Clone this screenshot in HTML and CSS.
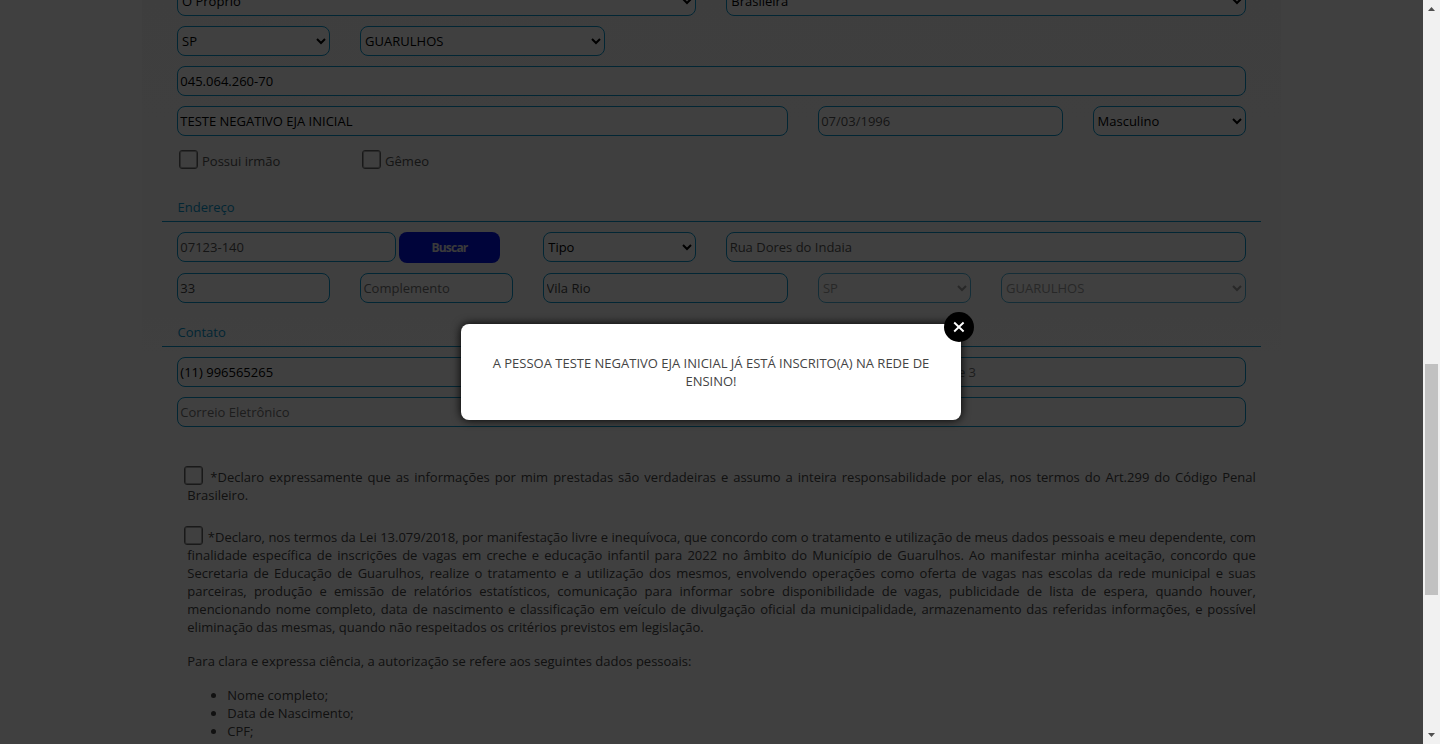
FILE: index.html
```html
<!DOCTYPE html>
<html lang="pt-BR">
<head>
<meta charset="utf-8">
<title>Inscrição</title>
<link rel="stylesheet" href="styles.css">
</head>
<body>
<div class="window">
  <div class="viewport">
    <main class="panel">
      <form class="form">
        <div class="row">
          <div class="c6"><select class="field"><option>O Próprio</option></select></div>
          <div class="c6"><select class="field"><option>Brasileira</option></select></div>
        </div>
        <div class="row">
          <div class="c2"><select class="field"><option>SP</option></select></div>
          <div class="c3"><select class="field"><option>GUARULHOS</option></select></div>
        </div>
        <div class="row"><div class="c12"><input class="field" value="045.064.260-70"></div></div>
        <div class="row">
          <div class="c7"><input class="field" value="TESTE NEGATIVO EJA INICIAL"></div>
          <div class="c3"><input class="field muted" value="07/03/1996"></div>
          <div class="c2"><select class="field"><option>Masculino</option></select></div>
        </div>
        <div class="row checks">
          <label class="c2 check"><span class="box"></span>Possui irmão</label>
          <label class="c2 check"><span class="box"></span>Gêmeo</label>
        </div>
        <h2 class="legend">Endereço</h2>
        <div class="row">
          <div class="c4 zip"><input class="field muted" value="07123-140"><button class="search" type="button">Buscar</button></div>
          <div class="c2"><select class="field"><option>Tipo</option></select></div>
          <div class="c6"><input class="field muted" value="Rua Dores do Indaia"></div>
        </div>
        <div class="row">
          <div class="c2"><input class="field dark" value="33"></div>
          <div class="c2"><input class="field" placeholder="Complemento"></div>
          <div class="c3"><input class="field dark" value="Vila Rio"></div>
          <div class="c2"><select class="field" disabled><option>SP</option></select></div>
          <div class="c3"><select class="field" disabled><option>GUARULHOS</option></select></div>
        </div>
        <h2 class="legend contact">Contato</h2>
        <div class="row">
          <div class="c4"><input class="field" value="(11) 996565265"></div>
          <div class="c4"><input class="field" placeholder="Telefone 2"></div>
          <div class="c4"><input class="field" placeholder="Telefone 3"></div>
        </div>
        <div class="row"><div class="c12"><input class="field" placeholder="Correio Eletrônico"></div></div>
        <div class="terms">
          <p class="term first"><span class="box"></span>*Declaro expressamente que as informações por mim prestadas são verdadeiras e assumo a inteira responsabilidade por elas, nos termos do Art.299 do Código Penal Brasileiro.</p>
          <p class="term"><span class="box"></span>*Declaro, nos termos da Lei 13.079/2018, por manifestação livre e inequívoca, que concordo com o tratamento e utilização de meus dados pessoais e meu dependente, com finalidade específica de inscrições de vagas em creche e educação infantil para 2022 no âmbito do Município de Guarulhos. Ao manifestar minha aceitação, concordo que Secretaria de Educação de Guarulhos, realize o tratamento e a utilização dos mesmos, envolvendo operações como oferta de vagas nas escolas da rede municipal e suas parceiras, produção e emissão de relatórios estatísticos, comunicação para informar sobre disponibilidade de vagas, publicidade de lista de espera, quando houver, mencionando nome completo, data de nascimento e classificação em veículo de divulgação oficial da municipalidade, armazenamento das referidas informações, e possível eliminação das mesmas, quando não respeitados os critérios previstos em legislação.</p>
          <p class="note">Para clara e expressa ciência, a autorização se refere aos seguintes dados pessoais:</p>
          <ul class="list">
            <li>Nome completo;</li>
            <li>Data de Nascimento;</li>
            <li>CPF;</li>
          </ul>
        </div>
      </form>
    </main>
    <div class="overlay">
      <div class="modal">
        A PESSOA TESTE NEGATIVO EJA INICIAL JÁ ESTÁ INSCRITO(A) NA REDE DE ENSINO!
        <button class="close" type="button" aria-label="Fechar">
          <svg width="30" height="30" viewBox="0 0 30 30"><path d="M10.200 10.500l9.400 9M19.600 10.500l-9.400 9" stroke="#fff" stroke-width="1.900" fill="none"/></svg>
        </button>
      </div>
    </div>
  </div>
  <div class="scrollbar">
    <svg class="arrow" width="17" height="17" viewBox="0 0 17 17"><path d="M5 11h7L8.500 7z" fill="#505050"/></svg>
    <div class="thumb"></div>
    <svg class="arrow" width="17" height="17" viewBox="0 0 17 17"><path d="M5 6h7l-3.500 4z" fill="#505050"/></svg>
  </div>
</div>
</body>
</html>
```
FILE: styles.css
```css
* { box-sizing: border-box; }
body {
  margin: 0;
  overflow: hidden;
  font: 13px/18px "Open Sans", sans-serif;
  color: #444;
}
.window { display: flex; width: 1440px; height: 744px; overflow: hidden; }
.viewport { position: relative; flex: 1; height: 744px; overflow: hidden; background: #fff; }
.panel {
  width: 1139px;
  height: 744px;
  margin: 0 auto;
  padding: 0 20px;
  overflow: hidden;
  background: linear-gradient(#f8f8f8, #fafafa 240px, #fff 430px);
}
.form { width: 1098.7px; margin-top: -14px; }
.row { display: flex; margin-bottom: 10px; }
.c2, .c3, .c4, .c6, .c7, .c12 { padding: 0 15px; flex: none; }
.c2 { width: 16.6667%; }
.c3 { width: 25%; }
.c4 { width: 33.3333%; }
.c6 { width: 50%; }
.c7 { width: 58.3333%; }
.c12 { width: 100%; }
.field {
  display: block;
  width: 100%;
  height: 30px;
  margin: 0;
  padding: 1px 2px 1px 2.3px;
  border: 1px solid #0a98cf;
  border-radius: 8px;
  background: #fff;
  color: #000;
  font: 13px "Open Sans", sans-serif;
}
select.field { padding: 0; }
.field.muted { color: #555; }
.field.dark { color: #444; }
.field::placeholder { color: #757575; opacity: 1; }
.field:disabled { color: #777; opacity: .7; }
.box {
  display: inline-block;
  flex: none;
  width: 19px;
  height: 19px;
  border: 1px solid #666;
  border-radius: 3px;
  box-shadow: inset 0 0 0 1px #aaa;
}
.checks { height: 30px; margin: 0; }
.check { display: flex; align-items: center; gap: 4px; padding: 0 0 0 17px; color: #555; height: 30px; white-space: nowrap; }
.check .box { margin-bottom: 3px; }
.legend {
  height: 46px;
  margin: 0 0 10px;
  padding: 22px 15.5px 0;
  border-bottom: 1px solid #0a98cf;
  color: #0a98cf;
  font-size: 13px;
  font-weight: 400;
}
.legend.contact { height: 34px; padding-top: 10px; }
.zip { display: flex; gap: 3px; }
.zip .field { width: 219px; }
.search {
  width: 101px;
  height: 31px;
  padding: 0;
  border: 0;
  border-radius: 8px;
  background: #0010e8;
  color: #e8e8e8;
  font: 700 12px "Open Sans", sans-serif;
  letter-spacing: -.8px;
}
.terms { width: 1068.5px; margin: 41px 0 0 25.3px; text-align: justify; }
.term { margin: 0 0 24px; }
.term .box { margin: -4px 5px -3px -3.5px; vertical-align: -3px; position: relative; top: -3px; }
.term.first .box { margin-right: 7.5px; }
.note { margin: -8px 0 16px; }
.list { margin: 0; padding-left: 40px; }
.overlay {
  position: absolute;
  inset: 0;
  display: flex;
  align-items: center;
  justify-content: center;
  padding-right: 1px;
  background: rgba(0, 0, 0, .75);
}
.modal {
  position: relative;
  width: 500px;
  height: 96px;
  padding: 30px;
  border-radius: 8px;
  background: #fff;
  box-shadow: 0 0 10px #000;
  text-align: center;
}
.close {
  position: absolute;
  top: -12px;
  right: -13px;
  width: 30px;
  height: 30px;
  padding: 0;
  border: 0;
  border-radius: 50%;
  background: #000;
}
.close svg { display: block; }
.scrollbar { display: flex; flex-direction: column; width: 17px; height: 744px; background: #f1f1f1; }
.arrow { flex: none; display: block; }
.thumb { width: 13px; height: 231px; margin: 347px 2px 132px; background: #c1c1c1; }
```
